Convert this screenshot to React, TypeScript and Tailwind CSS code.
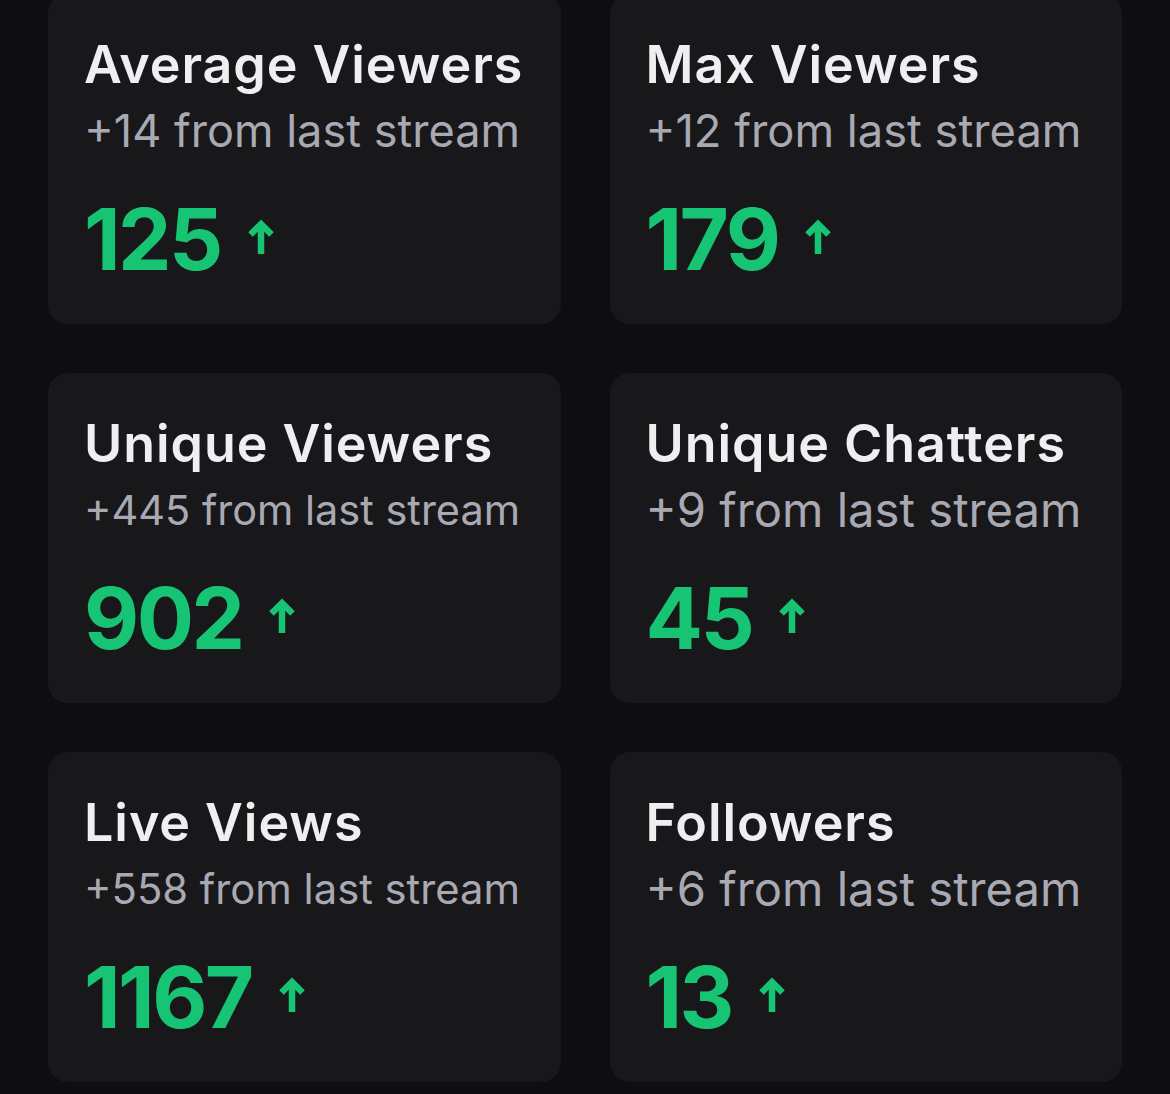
import React, { useLayoutEffect, useRef, useState } from 'react';

type Stat = {
  title: string;
  delta: string;
  value: string;
};

const stats: Stat[] = [
  { title: 'Average Viewers', delta: '+14 from last stream', value: '125' },
  { title: 'Max Viewers', delta: '+12 from last stream', value: '179' },
  { title: 'Unique Viewers', delta: '+445 from last stream', value: '902' },
  { title: 'Unique Chatters', delta: '+9 from last stream', value: '45' },
  { title: 'Live Views', delta: '+558 from last stream', value: '1167' },
  { title: 'Followers', delta: '+6 from last stream', value: '13' },
];

// subtitle text is shrunk/grown so it always spans the same width
const FIT_WIDTH = 436;

const FitText: React.FC<{ text: string }> = ({ text }) => {
  const ref = useRef<HTMLSpanElement>(null);
  const [size, setSize] = useState(46);

  useLayoutEffect(() => {
    const measure = () => {
      const el = ref.current;
      if (!el) return;
      const fs = parseFloat(getComputedStyle(el).fontSize);
      const w = el.getBoundingClientRect().width;
      if (w > 0 && fs > 0) setSize(Math.min(50, (fs * FIT_WIDTH) / w));
    };
    measure();
    document.fonts?.ready.then(measure);
  }, [text]);

  return (
    <span ref={ref} className="inline-block whitespace-nowrap" style={{ fontSize: size }}>
      {text}
    </span>
  );
};

const UpArrow = () => (
  <svg width="28" height="35" viewBox="0 0 28 35" fill="none" className="mt-[22px] shrink-0">
    <path d="M14 35V5" stroke="#16c474" strokeWidth="6.5" />
    <path d="M3.5 15.5L14 5L24.5 15.5" stroke="#16c474" strokeWidth="6.5" strokeLinejoin="miter" />
  </svg>
);

const StatCard: React.FC<{ stat: Stat }> = ({ stat }) => (
  <div className="h-[330px] rounded-[20px] bg-[#18181b] px-[36px] pt-[40px]">
    <h3 className="whitespace-nowrap text-[52px] leading-[62px] font-semibold text-[#efeff1] tracking-[0.018em]">
      {stat.title}
    </h3>
    <p className="mt-[7px] h-[56px] leading-[56px] font-normal text-[#a9a9b3]">
      <FitText text={stat.delta} />
    </p>
    <div className="mt-[38px] flex items-start gap-[26px]">
      <span className="text-[85px] leading-[85px] font-bold tracking-[-0.03em] text-[#16c474]">
        {stat.value}
      </span>
      <UpArrow />
    </div>
  </div>
);

export default function App() {
  return (
    <div
      className="h-[1094px] w-full overflow-hidden bg-[#0e0e10]"
      style={{ fontFamily: 'Inter, "Noto Sans", sans-serif' }}
    >
      <div className="-mt-[6px] grid grid-cols-2 gap-[49px] px-[48px]">
        {stats.map((s) => (
          <StatCard key={s.title} stat={s} />
        ))}
      </div>
    </div>
  );
}
